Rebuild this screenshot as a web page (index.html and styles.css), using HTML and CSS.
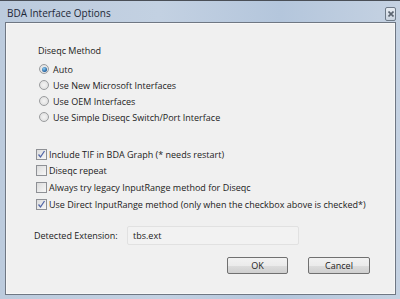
FILE: index.html
```html
<!DOCTYPE html>
<html lang="en">
<head>
    <meta charset="UTF-8">
    <title>BDA Interface Options</title>
    <link rel="stylesheet" href="styles.css">
</head>
<body>
    <div class="window">
        <div class="titlebar">
            <span class="title">BDA Interface Options</span>
            <button class="close" aria-label="Close">
                <svg width="6" height="6" viewBox="0 0 6 6"><path d="M0.5 0.5 L5.5 5.5 M5.5 0.5 L0.5 5.5" stroke="#5b6470" stroke-width="1.6"/></svg>
            </button>
        </div>
        <div class="client">
            <div class="heading">Diseqc Method</div>
            <div class="radios">
                <label class="row"><span class="radio checked"></span>Auto</label>
                <label class="row"><span class="radio"></span>Use New Microsoft Interfaces</label>
                <label class="row"><span class="radio"></span>Use OEM Interfaces</label>
                <label class="row"><span class="radio"></span>Use Simple Diseqc Switch/Port Interface</label>
            </div>
            <div class="checks">
                <label class="row"><span class="check checked"><svg width="9" height="9" viewBox="0 0 9 9"><path d="M1.5 4.5 L3.5 7 L7.5 1" fill="none" stroke="#5468a8" stroke-width="1.3"/></svg></span>Include TIF in BDA Graph (* needs restart)</label>
                <label class="row"><span class="check"></span>Diseqc repeat</label>
                <label class="row"><span class="check"></span>Always try legacy InputRange method for Diseqc</label>
                <label class="row"><span class="check checked"><svg width="9" height="9" viewBox="0 0 9 9"><path d="M1.5 4.5 L3.5 7 L7.5 1" fill="none" stroke="#5468a8" stroke-width="1.3"/></svg></span>Use Direct InputRange method (only when the checkbox above is checked*)</label>
            </div>
            <div class="extension">
                <span class="ext-label">Detected Extension:</span>
                <div class="ext-box">tbs.ext</div>
            </div>
            <div class="buttons">
                <button class="btn ok">OK</button>
                <button class="btn cancel">Cancel</button>
            </div>
        </div>
    </div>
</body>
</html>
```

FILE: styles.css
```css
* {
    margin: 0;
    padding: 0;
    box-sizing: border-box;
}

body {
    width: 400px;
    height: 299px;
    overflow: hidden;
    font-family: 'Open Sans', 'Noto Sans', sans-serif;
    font-size: 9px;
    color: #222;
    background: #fff;
}

.window {
    width: 400px;
    height: 299px;
    display: flex;
    flex-direction: column;
    background: linear-gradient(90deg, #bccbdd 0%, #c3d1e2 40%, #b4c6dc 70%, #c5d2e2 100%);
    border-top: 1px solid #4a4f57;
    padding: 0 4px 4px 5px;
}

.titlebar {
    height: 21px;
    display: flex;
    align-items: center;
    justify-content: space-between;
    padding-left: 2px;
}

.title {
    font-size: 10px;
    color: #1e2838;
    margin-top: 3px;
}

.close {
    width: 11px;
    height: 14px;
    margin-top: 5px;
    border: 1px solid #6e7a88;
    border-radius: 2px;
    background: linear-gradient(#e8edf3, #c9d3df);
    display: grid;
    place-items: center;
}

.client {
    flex: 1;
    background: #f0f0f0;
    border: 1px solid #6f7783;
    box-shadow: inset 0 0 0 1px #f7f7f7;
    padding: 20px 0 0 0;
}

.heading {
    line-height: 16px;
    padding-left: 32px;
}

.row {
    display: flex;
    align-items: center;
    white-space: nowrap;
}

.radios {
    margin-top: 2px;
    padding-left: 33px;
}

.radios .row {
    height: 16px;
}

.radio {
    width: 10px;
    height: 10px;
    border-radius: 50%;
    border: 1px solid #9a9c9e;
    background: radial-gradient(circle at 50% 50%, #f4f4f4, #d9d9d9);
    margin-right: 4px;
    display: grid;
    place-items: center;
}

.radio.checked::after {
    content: '';
    width: 5px;
    height: 5px;
    border-radius: 50%;
    background: radial-gradient(circle at 40% 35%, #8fd0f5, #1f5d9c 70%);
}

.checks {
    margin-top: 21px;
    padding-left: 30px;
}

.checks .row {
    height: 16.6px;
}

.check {
    width: 11px;
    height: 11px;
    border: 1px solid #8e9095;
    background: linear-gradient(135deg, #dcdcdc, #f7f7f7);
    margin-right: 2px;
    display: grid;
    place-items: center;
}

.extension {
    margin-top: 14px;
    display: flex;
    align-items: center;
    padding-left: 28px;
}

.ext-label {
    width: 93px;
}

.ext-box {
    width: 172px;
    height: 19px;
    border: 1px solid #e1e1e1;
    border-radius: 2px;
    background: #f2f2f2;
    line-height: 17px;
    padding-left: 5px;
}

.buttons {
    margin-top: 12px;
    display: flex;
    justify-content: flex-end;
    gap: 20px;
    padding-right: 25px;
}

.btn {
    height: 17px;
    border: 1px solid #707070;
    border-radius: 2px;
    background: linear-gradient(#f2f2f2 0%, #ebebeb 50%, #dddddd 51%, #cfcfcf 100%);
    font-family: 'Open Sans', 'Noto Sans', sans-serif;
    font-size: 9px;
    color: #222;
}

.ok {
    width: 61px;
}

.cancel {
    width: 62px;
}
```
